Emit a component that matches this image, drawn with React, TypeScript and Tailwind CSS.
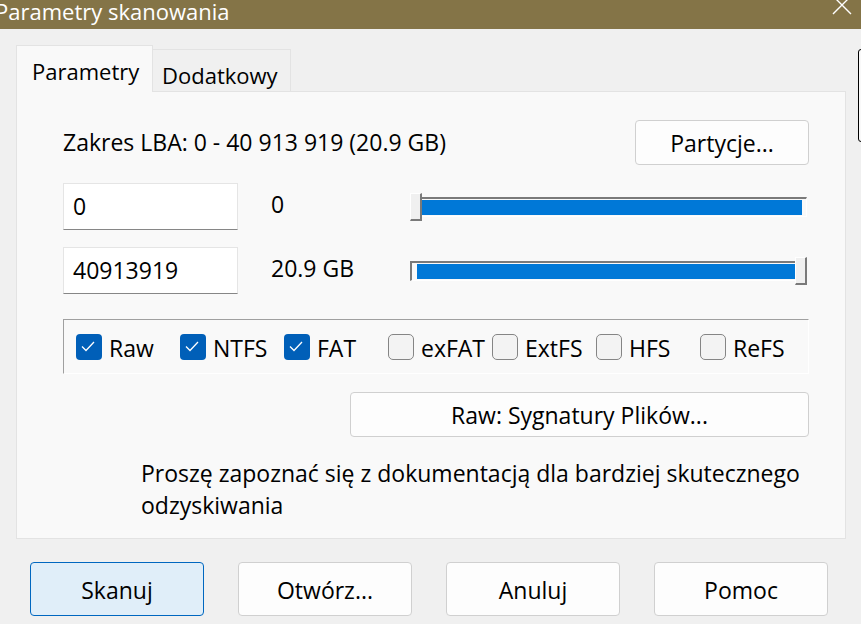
import React from 'react'

const font = "font-['Open_Sans','Noto_Sans',sans-serif]"

const Check = ({ label, checked }: { label: string; checked?: boolean }) => (
  <div className="w-[104px] flex items-center gap-[7px]">
    {checked ? (
      <div className="w-[26px] h-[26px] rounded-[4px] bg-[#005fb8] shrink-0">
        <svg viewBox="0 0 26 26" className="w-[26px] h-[26px]">
          <path d="M6 12.5 L10 16.5 L18 8" fill="none" stroke="white" strokeWidth="1.3" />
        </svg>
      </div>
    ) : (
      <div className="w-[26px] h-[26px] rounded-[5px] bg-[#f3f3f3] border border-[#858585] shrink-0" />
    )}
    <span className="leading-[30px] pt-[2px] whitespace-nowrap">{label}</span>
  </div>
)

const Slider = ({ start }: { start: boolean }) => (
  <div className="relative w-[397px] h-[20px]">
    <div className="w-full h-full border-t-2 border-l-2 border-[#7a7a7a] border-b border-r border-b-white border-r-white flex items-center">
      {start ? (
        <div className="ml-[10px] mr-[4px] h-[15px] flex-1 bg-[#0078d7]" />
      ) : (
        <div className="ml-[5px] mr-[10px] h-[15px] flex-1 bg-[#0078d7]" />
      )}
    </div>
    <div
      className={
        'absolute top-[-4px] w-[12px] h-[28px] bg-[#f0f0f0] border-t border-l border-white border-b-2 border-r-2 border-b-[#7a7a7a] border-r-[#7a7a7a] ' +
        (start ? 'left-0' : 'right-0')
      }
    />
  </div>
)

const Button = ({ children, primary, className }: { children: React.ReactNode; primary?: boolean; className?: string }) => (
  <div
    className={
      'flex items-center justify-center rounded-[4px] border ' +
      (primary ? 'bg-[#e0eef9] border-[#0067c0] ' : 'bg-[#fdfdfd] border-[#d0d0d0] ') +
      (className ?? '')
    }
  >
    <span className="leading-[30px] pt-px whitespace-nowrap">{children}</span>
  </div>
)

export default function App() {
  return (
    <div className={`relative w-[861px] h-[624px] overflow-hidden bg-[#f0f0f0] text-[23px] text-black ${font}`}>
      {/* title bar */}
      <div className="h-[29px] bg-[#847447] flex justify-between overflow-hidden">
        <span className="-ml-[5px] -mt-[4px] text-[22px] leading-[30px] text-white whitespace-nowrap">Parametry skanowania</span>
        <svg viewBox="0 0 20 20" className="w-[20px] h-[20px] mr-[9px] -mt-[5px]">
          <path d="M1 1 L19 19 M19 1 L1 19" stroke="white" strokeWidth="1.4" />
        </svg>
      </div>

      <div className="pl-[16px] pr-[15px] pt-[16px]">
        {/* tabs */}
        <div className="flex items-end h-[46px] text-[22px]">
          <div className="relative z-10 w-[137px] h-[47px] -mb-px bg-[#f9f9f9] border border-b-0 border-[#e3e3e3] pl-[15px] pt-[9px]">
            <span className="leading-[30px]">Parametry</span>
          </div>
          <div className="w-[138px] h-[42px] bg-[#f0f0f0] border border-l-0 border-b-0 border-[#e3e3e3] pl-[9px] pt-[9px]">
            <span className="leading-[30px]">Dodatkowy</span>
          </div>
        </div>

        {/* panel */}
        <div className="h-[448px] bg-[#f9f9f9] border border-[#e3e3e3] pl-[46px] pr-[36px] pt-[28px] flex flex-col">
          <div className="flex items-center justify-between h-[45px]">
            <span className="leading-[30px] pb-[2px]">Zakres LBA: 0 - 40 913 919 (20.9 GB)</span>
            <Button className="w-[174px] h-[45px]">Partycje...</Button>
          </div>

          <div className="flex items-center h-[47px] mt-[18px]">
            <div className="w-[175px] h-[47px] bg-white border border-[#e5e5e5] border-b-[#868686] pl-[9px] pt-[5px]">
              <span className="leading-[30px]">0</span>
            </div>
            <div className="w-[172px] pl-[33px] self-start pt-[6px] leading-[30px]">0</div>
            <Slider start />
          </div>

          <div className="flex items-center h-[47px] mt-[17px]">
            <div className="w-[175px] h-[47px] bg-white border border-[#e5e5e5] border-b-[#868686] pl-[9px] pt-[5px]">
              <span className="leading-[30px]">40913919</span>
            </div>
            <div className="w-[172px] pl-[33px] self-start pt-[6px] leading-[30px] whitespace-nowrap">20.9 GB</div>
            <Slider start={false} />
          </div>

          <div className="mt-[25px] h-[55px] border-t border-l border-[#a0a0a0] border-b border-r border-b-white border-r-white flex items-center pl-[12px]">
            <Check label="Raw" checked />
            <Check label="NTFS" checked />
            <Check label="FAT" checked />
            <Check label="exFAT" />
            <Check label="ExtFS" />
            <Check label="HFS" />
            <Check label="ReFS" />
          </div>

          <div className="flex justify-end mt-[18px]">
            <Button className="w-[459px] h-[45px]">Raw: Sygnatury Plików...</Button>
          </div>

          <p className="mt-[20px] ml-[78px] leading-[32px]">
            Proszę zapoznać się z dokumentacją dla bardziej skutecznego
            <br />
            odzyskiwania
          </p>
        </div>
      </div>

      {/* bottom buttons */}
      <div className="flex gap-[34px] pl-[30px] mt-[23px]">
        <Button primary className="w-[174px] h-[54px]">Skanuj</Button>
        <Button className="w-[174px] h-[54px]">Otwórz...</Button>
        <Button className="w-[174px] h-[54px]">Anuluj</Button>
        <Button className="w-[174px] h-[54px]">Pomoc</Button>
      </div>

      {/* edge of a window behind, on the right */}
      <div className="absolute left-[858px] top-[49px] w-[20px] h-[93px] border border-black rounded-[3px] bg-[#f9f9f9]" />
    </div>
  )
}
